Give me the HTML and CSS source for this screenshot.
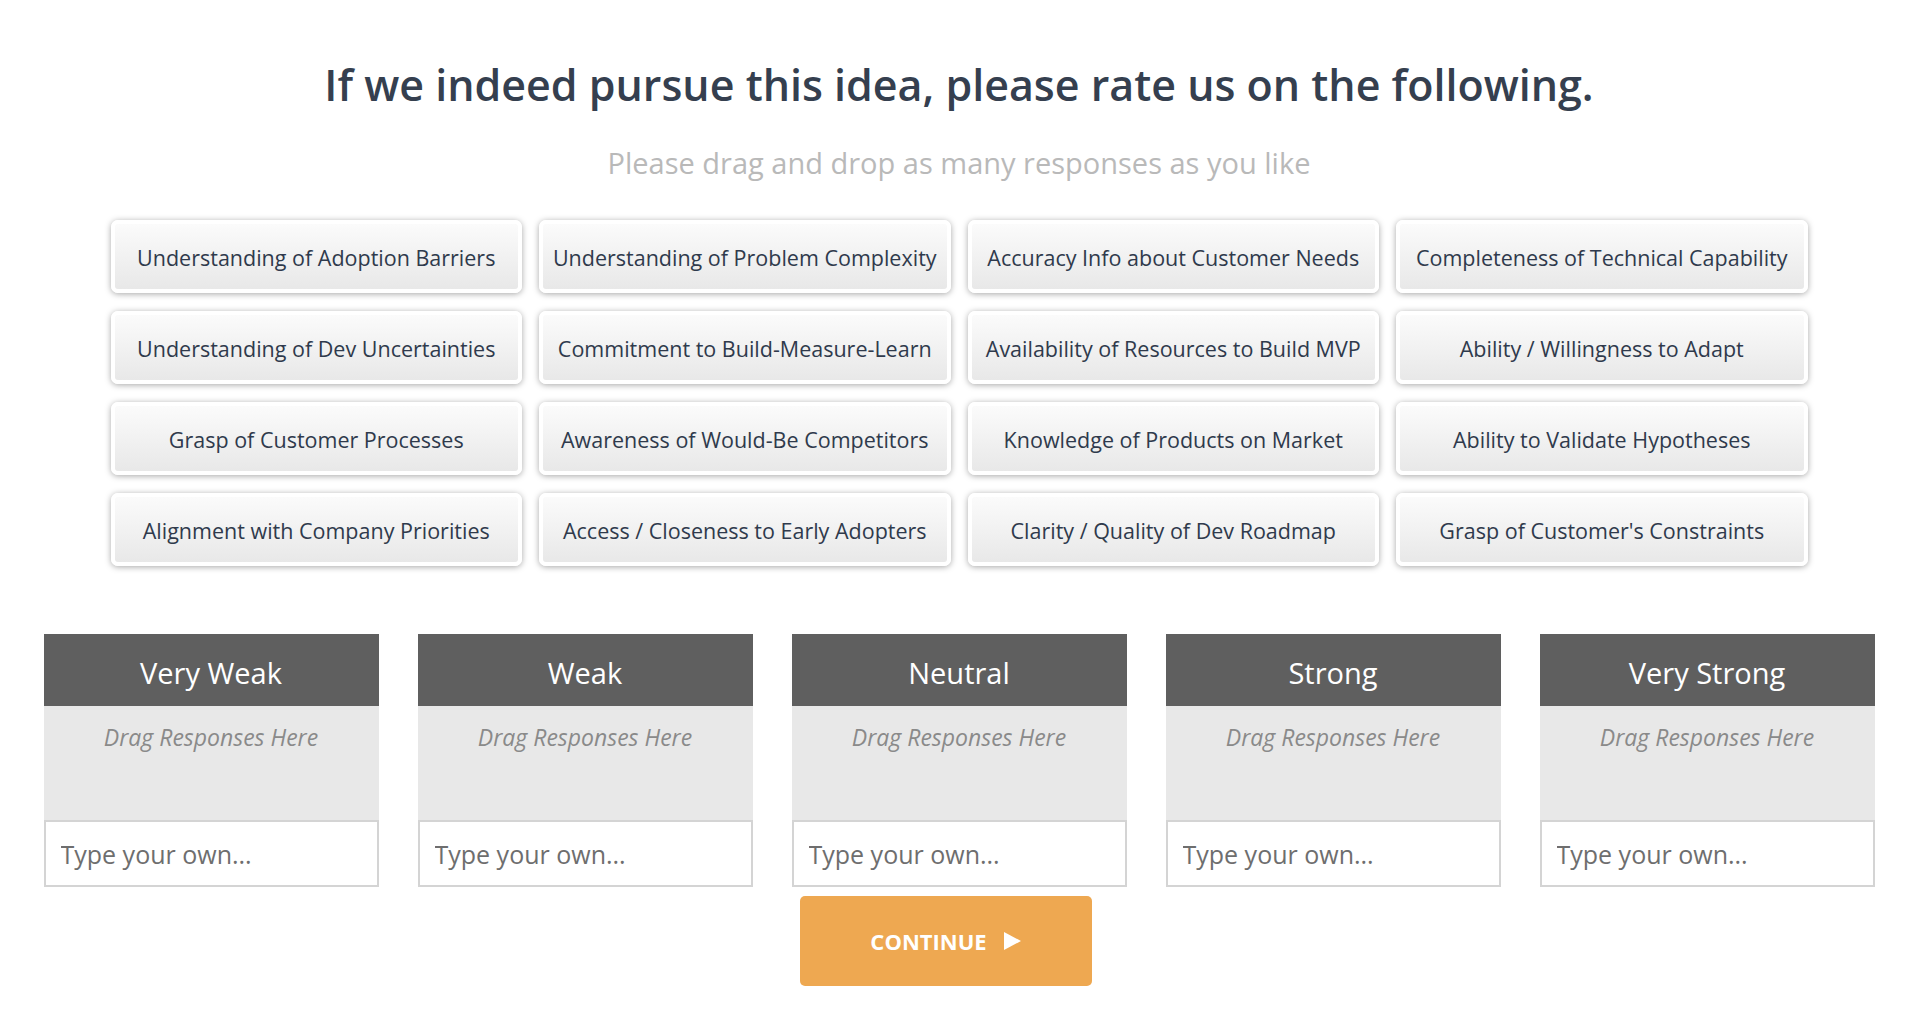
FILE: index.html
```html
<!DOCTYPE html>
<html lang="en">
<head>
    <meta charset="UTF-8">
    <title>Rate Us</title>
    <link rel="stylesheet" href="styles.css">
</head>
<body>
    <div id="survey">
        <h1>If we indeed pursue this idea, please rate us on the following.</h1>
        <p class="subtitle">Please drag and drop as many responses as you like</p>

        <div class="response-grid">
            <div class="response">Understanding of Adoption Barriers</div>
            <div class="response">Understanding of Problem Complexity</div>
            <div class="response">Accuracy Info about Customer Needs</div>
            <div class="response">Completeness of Technical Capability</div>
            <div class="response">Understanding of Dev Uncertainties</div>
            <div class="response">Commitment to Build-Measure-Learn</div>
            <div class="response">Availability of Resources to Build MVP</div>
            <div class="response">Ability / Willingness to Adapt</div>
            <div class="response">Grasp of Customer Processes</div>
            <div class="response">Awareness of Would-Be Competitors</div>
            <div class="response">Knowledge of Products on Market</div>
            <div class="response">Ability to Validate Hypotheses</div>
            <div class="response">Alignment with Company Priorities</div>
            <div class="response">Access / Closeness to Early Adopters</div>
            <div class="response">Clarity / Quality of Dev Roadmap</div>
            <div class="response">Grasp of Customer's Constraints</div>
        </div>

        <div class="bucket-row">
            <div class="bucket">
                <div class="bucket-title">Very Weak</div>
                <div class="bucket-drop">Drag Responses Here</div>
                <input class="bucket-input" type="text" placeholder="Type your own...">
            </div>
            <div class="bucket">
                <div class="bucket-title">Weak</div>
                <div class="bucket-drop">Drag Responses Here</div>
                <input class="bucket-input" type="text" placeholder="Type your own...">
            </div>
            <div class="bucket">
                <div class="bucket-title">Neutral</div>
                <div class="bucket-drop">Drag Responses Here</div>
                <input class="bucket-input" type="text" placeholder="Type your own...">
            </div>
            <div class="bucket">
                <div class="bucket-title">Strong</div>
                <div class="bucket-drop">Drag Responses Here</div>
                <input class="bucket-input" type="text" placeholder="Type your own...">
            </div>
            <div class="bucket">
                <div class="bucket-title">Very Strong</div>
                <div class="bucket-drop">Drag Responses Here</div>
                <input class="bucket-input" type="text" placeholder="Type your own...">
            </div>
        </div>

        <div class="actions">
            <button class="continue-button">CONTINUE <span class="arrow"></span></button>
        </div>
    </div>
</body>
</html>
```

FILE: styles.css
```css
body {
    font-family: 'Open Sans', 'Noto Sans', sans-serif;
    margin: 0;
    background-color: #ffffff;
}
#survey {
    display: flex;
    flex-direction: column;
    align-items: center;
}
h1 {
    margin: 58px 0 0;
    font-size: 43px;
    font-weight: 600;
    line-height: 53px;
    color: #353f4f;
}
.subtitle {
    margin: 36px 0 0;
    font-size: 29px;
    line-height: 32px;
    color: #b9b9b9;
}
.response-grid {
    display: grid;
    grid-template-columns: repeat(4, 1fr);
    gap: 18px 17px;
    width: 1697px;
    margin-top: 41px;
}
.response {
    height: 65px;
    display: flex;
    align-items: center;
    justify-content: center;
    padding-top: 1px;
    box-sizing: border-box;
    height: 73px;
    border: 4px solid #ffffff;
    border-radius: 7px;
    background: linear-gradient(#fbfbfb, #e8e8e8);
    box-shadow: 0 1px 6px rgba(0, 0, 0, 0.35);
    font-size: 21.5px;
    color: #2f3a4c;
}
.bucket-row {
    display: grid;
    grid-template-columns: repeat(5, 1fr);
    gap: 39px;
    width: 1831px;
    margin-top: 68px;
}
.bucket {
    display: flex;
    flex-direction: column;
}
.bucket-title {
    height: 72px;
    box-sizing: border-box;
    padding-top: 4px;
    display: flex;
    align-items: center;
    justify-content: center;
    background-color: #5f5f5f;
    color: #ffffff;
    font-size: 29px;
}
.bucket-drop {
    height: 114px;
    box-sizing: border-box;
    padding-top: 15px;
    background-color: #e8e8e8;
    text-align: center;
    font-size: 23px;
    font-style: italic;
    color: #8a8a8a;
}
.bucket-input {
    height: 67px;
    box-sizing: border-box;
    width: 100%;
    margin: 0;
    padding: 0 15px;
    border: 2px solid #d4d4d4;
    font-family: 'Open Sans', 'Noto Sans', sans-serif;
    font-size: 25px;
    color: #555555;
    background: #ffffff;
}
.bucket-input::placeholder {
    color: #6e6e6e;
}
.bucket-input:focus {
    outline: none;
}
.actions {
    width: 100%;
    display: flex;
    justify-content: center;
    padding-right: 27px;
    box-sizing: border-box;
    margin-top: 9px;
}
.continue-button {
    width: 292px;
    height: 90px;
    border: none;
    border-radius: 5px;
    background-color: #eea851;
    color: #ffffff;
    font-family: 'Open Sans', 'Noto Sans', sans-serif;
    font-size: 22px;
    font-weight: 700;
    display: flex;
    align-items: center;
    justify-content: center;
    gap: 17px;
    cursor: pointer;
}
.arrow {
    width: 0;
    height: 0;
    border-top: 9px solid transparent;
    border-bottom: 9px solid transparent;
    border-left: 17px solid #ffffff;
}
```
